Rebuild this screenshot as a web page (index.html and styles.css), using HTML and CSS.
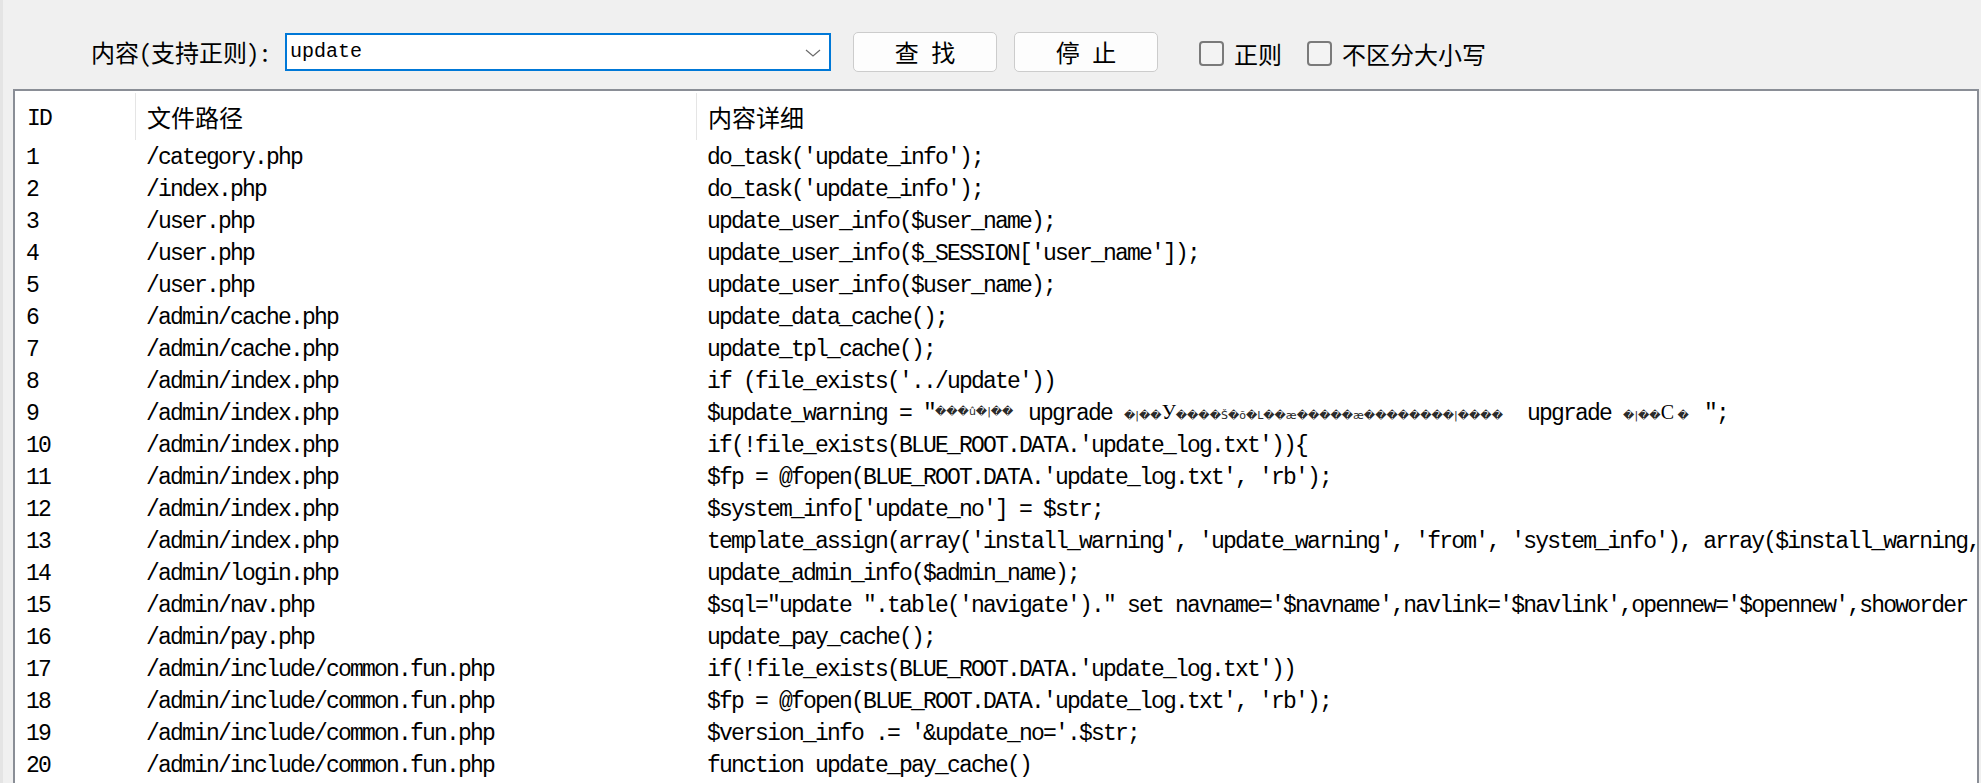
FILE: index.html
```html
<!DOCTYPE html>
<html lang="zh-CN">
<head>
<meta charset="utf-8">
<title>搜索</title>
<link rel="stylesheet" href="styles.css">
</head>
<body>
<div class="app">
  <div class="toolbar">
    <span class="label">内容(支持正则):</span>
    <div class="combo">
      <span class="combo-text">update</span>
      <svg class="chev" viewBox="0 0 16 8" width="16" height="8"><path d="M1 1 L8 7 L15 1" fill="none" stroke="#6b6b6b" stroke-width="1.2"/></svg>
    </div>
    <button class="btn btn-find">查 找</button>
    <button class="btn btn-stop">停 止</button>
    <label class="check check-regex"><span class="box"></span>正则</label>
    <label class="check check-case"><span class="box"></span>不区分大小写</label>
  </div>
  <div class="panel">
    <div class="row head">
      <div class="cell c-id">ID</div>
      <div class="cell c-path">文件路径</div>
      <div class="cell c-content">内容详细</div>
    </div>
    <div class="row"><div class="cell c-id">1</div><div class="cell c-path">/category.php</div><div class="cell c-content">do_task('update_info');</div></div>
    <div class="row"><div class="cell c-id">2</div><div class="cell c-path">/index.php</div><div class="cell c-content">do_task('update_info');</div></div>
    <div class="row"><div class="cell c-id">3</div><div class="cell c-path">/user.php</div><div class="cell c-content">update_user_info($user_name);</div></div>
    <div class="row"><div class="cell c-id">4</div><div class="cell c-path">/user.php</div><div class="cell c-content">update_user_info($_SESSION['user_name']);</div></div>
    <div class="row"><div class="cell c-id">5</div><div class="cell c-path">/user.php</div><div class="cell c-content">update_user_info($user_name);</div></div>
    <div class="row"><div class="cell c-id">6</div><div class="cell c-path">/admin/cache.php</div><div class="cell c-content">update_data_cache();</div></div>
    <div class="row"><div class="cell c-id">7</div><div class="cell c-path">/admin/cache.php</div><div class="cell c-content">update_tpl_cache();</div></div>
    <div class="row"><div class="cell c-id">8</div><div class="cell c-path">/admin/index.php</div><div class="cell c-content">if (file_exists('../update'))</div></div>
    <div class="row"><div class="cell c-id">9</div><div class="cell c-path">/admin/index.php</div><div class="cell c-content">$update_warning = "<span class="moj moj-a">���û�|��</span> upgrade <span class="moj moj-b">�|��<span class="big">У</span>����Š�õ�L��æ�����æ��������|����</span> upgrade <span class="moj moj-c">�|��<span class="big">C</span> �</span>";</div></div>
    <div class="row"><div class="cell c-id">10</div><div class="cell c-path">/admin/index.php</div><div class="cell c-content">if(!file_exists(BLUE_ROOT.DATA.'update_log.txt')){</div></div>
    <div class="row"><div class="cell c-id">11</div><div class="cell c-path">/admin/index.php</div><div class="cell c-content">$fp = @fopen(BLUE_ROOT.DATA.'update_log.txt', 'rb');</div></div>
    <div class="row"><div class="cell c-id">12</div><div class="cell c-path">/admin/index.php</div><div class="cell c-content">$system_info['update_no'] = $str;</div></div>
    <div class="row"><div class="cell c-id">13</div><div class="cell c-path">/admin/index.php</div><div class="cell c-content">template_assign(array('install_warning', 'update_warning', 'from', 'system_info'), array($install_warning, $update_warning, $from, $system_info));</div></div>
    <div class="row"><div class="cell c-id">14</div><div class="cell c-path">/admin/login.php</div><div class="cell c-content">update_admin_info($admin_name);</div></div>
    <div class="row"><div class="cell c-id">15</div><div class="cell c-path">/admin/nav.php</div><div class="cell c-content">$sql="update ".table('navigate')." set navname='$navname',navlink='$navlink',opennew='$opennew',showorder = '$showorder' where navid=".$navid;</div></div>
    <div class="row"><div class="cell c-id">16</div><div class="cell c-path">/admin/pay.php</div><div class="cell c-content">update_pay_cache();</div></div>
    <div class="row"><div class="cell c-id">17</div><div class="cell c-path">/admin/include/common.fun.php</div><div class="cell c-content">if(!file_exists(BLUE_ROOT.DATA.'update_log.txt'))</div></div>
    <div class="row"><div class="cell c-id">18</div><div class="cell c-path">/admin/include/common.fun.php</div><div class="cell c-content">$fp = @fopen(BLUE_ROOT.DATA.'update_log.txt', 'rb');</div></div>
    <div class="row"><div class="cell c-id">19</div><div class="cell c-path">/admin/include/common.fun.php</div><div class="cell c-content">$version_info .= '&amp;update_no='.$str;</div></div>
    <div class="row"><div class="cell c-id">20</div><div class="cell c-path">/admin/include/common.fun.php</div><div class="cell c-content">function update_pay_cache()</div></div>
  </div>
</div>
</body>
</html>
```
FILE: styles.css
```css
html, body {
  margin: 0;
  padding: 0;
  height: 100%;
}
body {
  background: #f0f0f0;
  overflow: hidden;
  font-family: "Noto Sans CJK SC", "Noto Sans", sans-serif;
  color: #000;
}
.app {
  height: 783px;
  box-sizing: border-box;
  border-left: 3px solid #e4e4e4;
  display: flex;
  flex-direction: column;
}
.toolbar {
  height: 89px;
  box-sizing: border-box;
  display: flex;
  align-items: center;
  padding: 14px 0 0 88px;
  flex: none;
}
.label {
  font-family: "Noto Sans Mono CJK SC", "Noto Sans CJK SC", sans-serif;
  font-size: 24px;
  width: 194px;
  white-space: nowrap;
  line-height: 30px;
}
.combo {
  width: 546px;
  height: 38px;
  box-sizing: border-box;
  border: 2px solid #0078d7;
  background: #fff;
  display: flex;
  align-items: center;
  padding-left: 3px;
}
.combo-text {
  flex: 1;
  font-family: "Liberation Mono", monospace;
  font-size: 20px;
  line-height: 24px;
}
.chev {
  margin-right: 8px;
  margin-top: 2px;
}
.btn {
  width: 144px;
  height: 40px;
  box-sizing: border-box;
  border: 1px solid #cccccc;
  border-radius: 5px;
  background: #fdfdfd;
  font-family: "Noto Sans CJK SC", sans-serif;
  font-size: 24px;
  word-spacing: 7px;
  color: #000;
  padding: 0;
  line-height: 36px;
}
.btn-find { margin-left: 22px; }
.btn-stop { margin-left: 17px; }
.check {
  display: flex;
  align-items: center;
  font-size: 24px;
  line-height: 30px;
  margin-top: 4px;
}
.check-regex { margin-left: 41px; }
.check-case { margin-left: 25px; }
.box {
  width: 25px;
  height: 25px;
  box-sizing: border-box;
  border: 2px solid #7a7a7a;
  border-radius: 4px;
  background: #f3f3f3;
  margin-right: 10px;
}
.panel {
  flex: 1;
  margin: 0 2px 0 10px;
  border: 2px solid #8a8e96;
  border-bottom: none;
  background: #fff;
  overflow: hidden;
}
.row {
  display: grid;
  grid-template-columns: 120px 561px 1fr;
  height: 32px;
  line-height: 32px;
  font-family: "Liberation Mono", monospace;
  font-size: 23px;
  letter-spacing: -1.8px;
  white-space: nowrap;
}
.cell {
  padding-left: 11px;
  overflow: hidden;
}
.head {
  height: 51px;
  box-sizing: border-box;
  padding: 2px 0;
  line-height: 47px;
}
.head .cell {
  padding-left: 12px;
}
.head .c-id {
  padding-top: 3px;
  box-sizing: border-box;
}
.head .c-path,
.head .c-content {
  border-left: 1px solid #e5e5e5;
  padding-left: 11px;
  font-family: "Noto Sans CJK SC", sans-serif;
  font-size: 24px;
  letter-spacing: 0;
}
.moj {
  display: inline-block;
  vertical-align: middle;
  font-family: "DejaVu Sans", sans-serif;
  font-size: 11px;
  letter-spacing: 0;
  line-height: 20px;
  height: 20px;
  color: #2a2a2a;
  margin-top: -4px;
}
.moj-a { width: 81px; }
.moj-b { width: 391px; }
.moj-c { width: 81px; }
.big {
  font-family: "Liberation Serif", serif;
  font-size: 20px;
  color: #000;
}
```
